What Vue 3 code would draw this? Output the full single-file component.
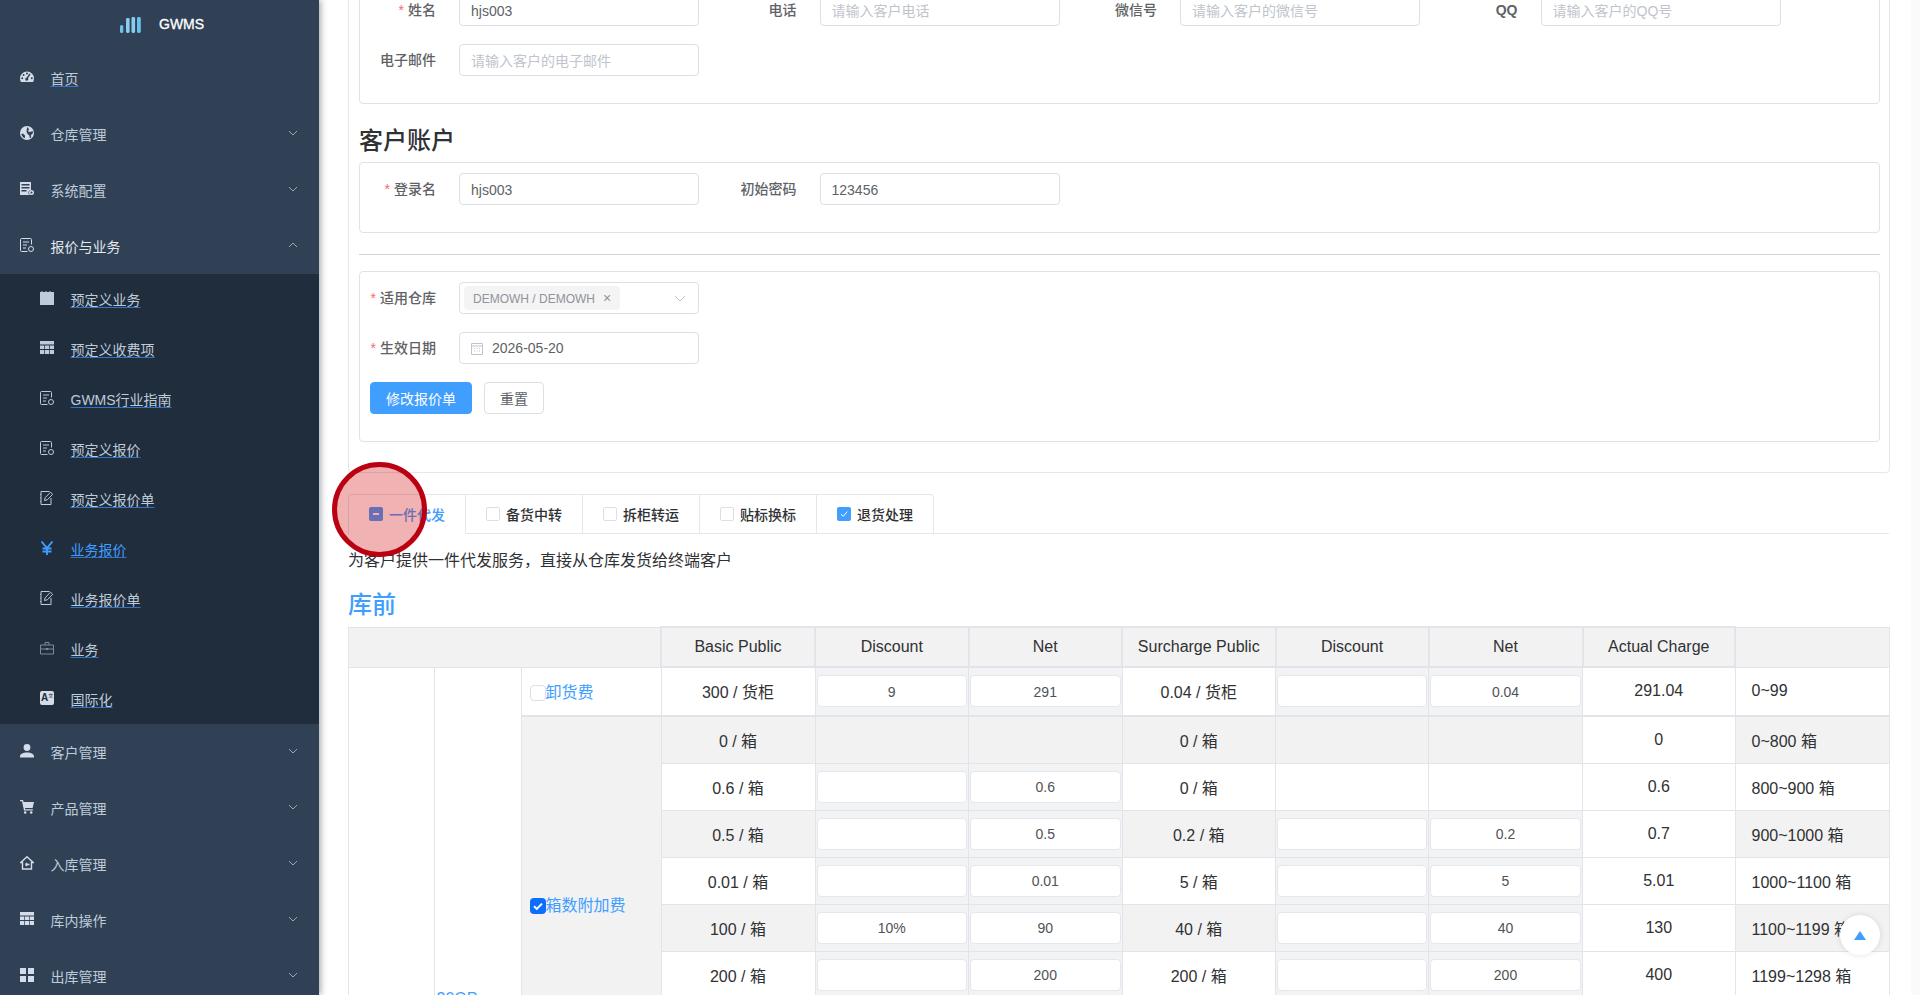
<script setup>
const hole = (x, y, r) => `M${x - r} ${y}a${r} ${r} 0 1 0 ${2 * r} 0a${r} ${r} 0 1 0 ${-2 * r} 0z`

const icons = {
  gauge: { d: "M7 1.5a7 7 0 0 0-7 7c0 1.3.3 2.5.9 3.5h12.2c.6-1 .9-2.2.9-3.5a7 7 0 0 0-7-7z" + hole(2.2, 8.3, 1) + hole(3.6, 4.9, 1) + hole(7, 3.6, 1) + hole(11.8, 8.3, 1) + "M10.6 4.2l-2.6 4a1.5 1.5 0 1 1-1.2-.6l2.6-4z" },
  globe: { d: "M7 0a7 7 0 1 0 0 14A7 7 0 0 0 7 0zM7.5 1L9 3.3 8 5.5l2 .6L12.7 5l.3 2-2 2 .1 2.6-1.2.7-.5-2.8L8 8.5 6.5 6 6.8 3zM1.3 8L3 7.5l2 2v2.2l-1 .4-1.6-1.7z" },
  server: { d: "M0 0h11v8a2.5 2.5 0 0 0-1.5 4.6V13H0zM1.5 2v1.4h8V2zM1.5 5v1.4h8V5zM1.5 8v1.4h5V8z" + hole(11.5, 10.5, 1) + "M11.5 8a2.5 2.5 0 1 0 0 5 2.5 2.5 0 0 0 0-5z" },
  report: { stroke: true, d: "M11.5 6.5V1.5a1 1 0 0 0-1-1h-9a1 1 0 0 0-1 1v11a1 1 0 0 0 1 1h6M3 4h6M3 7h4M3 10h3M13.5 11a2.5 2.5 0 1 1-5 0 2.5 2.5 0 0 1 5 0z" },
  note: { d: "M0 1h1.5V0h1v1h3V0h1v1h3V0h1v1H14v13H0z" },
  table: { d: "M0 0h14v3.5H0zM0 4.5h4.3V8H0zM5 4.5h4V8H5zM9.7 4.5H14V8H9.7zM0 9h4.3v4H0zM5 9h4v4H5zM9.7 9H14v4H9.7z" },
  edit: { stroke: true, d: "M9.5.5H1v13h10V7M1 3.5H.2M1 7H.2M1 10.5H.2M4.5 9.5l.6-2.7L10.5 1.2l2.2 2.1-5.4 5.5z" },
  yen: { stroke: true, wide: true, d: "M1.5.5L7 7l5.5-6.5M7 7v7M2.5 7.5h9M2.5 10.5h9" },
  case: { stroke: true, d: "M.5 4h13v9H.5zM5 4V1.5h4V4M.5 8H6M8 8h5.5M6 7.5h2v1H6z" },
  person: { d: hole(7, 3.5, 3.4) + "M0 13.5v-1.3C0 9.9 3.4 8.4 7 8.4s7 1.5 7 3.8v1.3z" },
  cart: { d: "M0 0h3l.6 2H14l-1.4 6H5l.2 1.2h7.6v1.2H4L2 1.2H0z" + hole(5.2, 12.5, 1.3) + hole(11.2, 12.5, 1.3) },
  home: { stroke: true, wide: true, d: "M7 .8L.8 6.5h1.7V13h9V6.5h1.7zM9.5 8.5h-4M5.5 8.5l1.6-1.5M5.5 8.5L7.1 10" },
  grid: { d: "M0 0h6v6H0zM8 0h6v6H8zM0 8h6v6H0zM8 8h6v6H8z" },
}

const topBefore = [
  { label: "首页", icon: "gauge", link: true },
  { label: "仓库管理", icon: "globe", arrow: "down" },
  { label: "系统配置", icon: "server", arrow: "down" },
  { label: "报价与业务", icon: "report", arrow: "up", open: true },
]
const subMenu = [
  { label: "预定义业务", icon: "note" },
  { label: "预定义收费项", icon: "table" },
  { label: "GWMS行业指南", icon: "report" },
  { label: "预定义报价", icon: "report" },
  { label: "预定义报价单", icon: "edit" },
  { label: "业务报价", icon: "yen", active: true },
  { label: "业务报价单", icon: "edit" },
  { label: "业务", icon: "case", dim: true },
  { label: "国际化", icon: "" },
]
const topAfter = [
  { label: "客户管理", icon: "person", arrow: "down" },
  { label: "产品管理", icon: "cart", arrow: "down" },
  { label: "入库管理", icon: "home", arrow: "down" },
  { label: "库内操作", icon: "table", arrow: "down" },
  { label: "出库管理", icon: "grid", arrow: "down" },
]

const tabs = [
  { label: "一件代发", state: "half", active: true },
  { label: "备货中转", state: "off" },
  { label: "拆柜转运", state: "off" },
  { label: "贴标换标", state: "off" },
  { label: "退货处理", state: "on" },
]

const colWidths = [85.5, 87, 140, 154, 153.5, 153.5, 153.5, 153, 154, 152.5, 154]
const heads = ["Basic Public", "Discount", "Net", "Surcharge Public", "Discount", "Net", "Actual Charge"]

// null means the cell has no input at all, "" an empty input
const rows = [
  { fee: "卸货费", span: 1, base: "300 / 货柜", d1: "9", n1: "291", sur: "0.04 / 货柜", d2: "", n2: "0.04", total: "291.04", range: "0~99" },
  { fee: "箱数附加费", checked: true, span: 8, alt: true, base: "0 / 箱", d1: null, n1: null, sur: "0 / 箱", d2: null, n2: null, total: "0", range: "0~800 箱" },
  { base: "0.6 / 箱", d1: "", n1: "0.6", sur: "0 / 箱", d2: null, n2: null, total: "0.6", range: "800~900 箱" },
  { alt: true, base: "0.5 / 箱", d1: "", n1: "0.5", sur: "0.2 / 箱", d2: "", n2: "0.2", total: "0.7", range: "900~1000 箱" },
  { base: "0.01 / 箱", d1: "", n1: "0.01", sur: "5 / 箱", d2: "", n2: "5", total: "5.01", range: "1000~1100 箱" },
  { alt: true, base: "100 / 箱", d1: "10%", n1: "90", sur: "40 / 箱", d2: "", n2: "40", total: "130", range: "1100~1199 箱" },
  { base: "200 / 箱", d1: "", n1: "200", sur: "200 / 箱", d2: "", n2: "200", total: "400", range: "1199~1298 箱" },
  { alt: true, base: "300 / 箱", d1: "", n1: "300", sur: "0 / 箱", d2: "", n2: "", total: "300", range: "1298~1400 箱" },
  { alt: false, base: "400 / 箱", d1: "", n1: "400", sur: "0 / 箱", d2: "", n2: "", total: "400", range: "1400~1500 箱" },
  { fee: "卸托费", span: 5, alt: true, base: "20 / 托", d1: "", n1: "20", sur: "0 / 托", d2: "", n2: "", total: "20", range: "0~10 托" },
  { base: "18 / 托", d1: "", n1: "18", sur: "0 / 托", d2: "", n2: "", total: "18", range: "10~20 托" },
  { alt: true, base: "16 / 托", d1: "", n1: "16", sur: "0 / 托", d2: "", n2: "", total: "16", range: "20~30 托" },
  { base: "15 / 托", d1: "", n1: "15", sur: "0 / 托", d2: "", n2: "", total: "15", range: "30~40 托" },
  { alt: true, base: "14 / 托", d1: "", n1: "14", sur: "0 / 托", d2: "", n2: "", total: "14", range: "40~50 托" },
]
</script>

<template>
  <div class="page">
    <aside class="sidebar">
      <div class="logo">
        <svg class="logo-mark" viewBox="0 0 21 16" width="21" height="16">
          <rect x="0" y="8" width="3.3" height="8" rx="1.6" fill="#6cc0ea" />
          <rect x="6" y="1" width="3.6" height="15" rx="1.4" fill="#8acdee" />
          <rect x="11.5" y="0" width="3.6" height="16" rx="1.4" fill="#8acdee" />
          <rect x="17" y="0" width="3.8" height="16" rx="1.4" fill="#6cc0ea" />
        </svg>
        <span class="logo-text">GWMS</span>
      </div>

      <nav>
        <div
          v-for="item in topBefore"
          :key="item.label"
          class="menu-item"
          :class="{ open: item.open }"
        >
          <svg class="icon" viewBox="0 0 14 14" width="14" height="14">
            <path
              :d="icons[item.icon].d"
              fill-rule="evenodd"
              :fill="icons[item.icon].stroke ? 'none' : 'currentColor'"
              :stroke="icons[item.icon].stroke ? 'currentColor' : 'none'"
            />
          </svg>
          <span :class="{ link: item.link }">{{ item.label }}</span>
          <svg v-if="item.arrow" class="arrow" :class="item.arrow" viewBox="0 0 10 6" width="10" height="6">
            <path d="M1 1l4 4 4-4" fill="none" stroke="currentColor" />
          </svg>
        </div>

        <div class="submenu">
          <div
            v-for="item in subMenu"
            :key="item.label"
            class="sub-item"
            :class="{ active: item.active, dim: item.dim }"
          >
            <svg v-if="item.icon" class="icon" viewBox="0 0 14 14" width="14" height="14">
              <path
                :d="icons[item.icon].d"
                fill-rule="evenodd"
                :fill="icons[item.icon].stroke ? 'none' : 'currentColor'"
                :stroke="icons[item.icon].stroke ? 'currentColor' : 'none'"
                :stroke-width="icons[item.icon].wide ? 1.9 : 1"
              />
            </svg>
            <span v-else class="icon trans">A<sup>文</sup></span>
            <span class="link">{{ item.label }}</span>
          </div>
        </div>

        <div v-for="item in topAfter" :key="item.label" class="menu-item">
          <svg class="icon" viewBox="0 0 14 14" width="14" height="14">
            <path
              :d="icons[item.icon].d"
              fill-rule="evenodd"
              :fill="icons[item.icon].stroke ? 'none' : 'currentColor'"
              :stroke="icons[item.icon].stroke ? 'currentColor' : 'none'"
              :stroke-width="icons[item.icon].wide ? 1.4 : 1"
            />
          </svg>
          <span>{{ item.label }}</span>
          <svg class="arrow" viewBox="0 0 10 6" width="10" height="6">
            <path d="M1 1l4 4 4-4" fill="none" stroke="currentColor" />
          </svg>
        </div>
      </nav>
    </aside>

    <main class="main">
      <section class="outer-card">
        <div class="card card-first">
          <div class="form-row">
            <div class="form-item">
              <label class="form-label"><i>*</i>姓名</label>
              <input class="text-input" value="hjs003" />
            </div>
            <div class="form-item">
              <label class="form-label">电话</label>
              <input class="text-input" placeholder="请输入客户电话" />
            </div>
            <div class="form-item">
              <label class="form-label">微信号</label>
              <input class="text-input" placeholder="请输入客户的微信号" />
            </div>
            <div class="form-item">
              <label class="form-label latin">QQ</label>
              <input class="text-input" placeholder="请输入客户的QQ号" />
            </div>
          </div>
          <div class="form-row">
            <div class="form-item">
              <label class="form-label">电子邮件</label>
              <input class="text-input" placeholder="请输入客户的电子邮件" />
            </div>
          </div>
        </div>

        <h3 class="block-title">客户账户</h3>
        <div class="card">
          <div class="form-row">
            <div class="form-item">
              <label class="form-label"><i>*</i>登录名</label>
              <input class="text-input" value="hjs003" />
            </div>
            <div class="form-item">
              <label class="form-label">初始密码</label>
              <input class="text-input" value="123456" />
            </div>
          </div>
        </div>

        <hr class="divider" />

        <div class="card">
          <div class="form-row">
            <div class="form-item">
              <label class="form-label"><i>*</i>适用仓库</label>
              <div class="select">
                <span class="tag">DEMOWH / DEMOWH<b>×</b></span>
                <svg class="select-arrow" viewBox="0 0 12 7" width="12" height="7">
                  <path d="M1 1l5 5 5-5" fill="none" stroke="currentColor" />
                </svg>
              </div>
            </div>
          </div>
          <div class="form-row">
            <div class="form-item">
              <label class="form-label"><i>*</i>生效日期</label>
              <div class="select date">
                <svg viewBox="0 0 12 13" width="12" height="13">
                  <path d="M.5 1.5h11v11H.5zM.5 4h11M3 6.5h1M5.5 6.5h1M8 6.5h1M3 9h1M5.5 9h1M8 9h1" fill="none" stroke="#c0c4cc" />
                </svg>
                <span>2026-05-20</span>
              </div>
            </div>
          </div>
          <div class="actions">
            <button class="btn primary">修改报价单</button>
            <button class="btn">重置</button>
          </div>
        </div>
      </section>

      <div class="tabs">
        <div class="tab-nav">
          <div v-for="tab in tabs" :key="tab.label" class="tab" :class="{ active: tab.active }">
            <span class="tab-check" :class="tab.state">
              <svg v-if="tab.state === 'on'" viewBox="0 0 14 14" width="14" height="14">
                <path d="M4 7l2.2 2.4L10.2 4.6" fill="none" stroke="#fff" />
              </svg>
              <em v-if="tab.state === 'half'"></em>
            </span>
            {{ tab.label }}
          </div>
        </div>
      </div>

      <p class="tab-desc">为客户提供一件代发服务，直接从仓库发货给终端客户</p>
      <h3 class="block-title blue">库前</h3>

      <table class="fee-table">
        <colgroup>
          <col v-for="(w, i) in colWidths" :key="i" :style="{ width: w + 'px' }" />
        </colgroup>
        <thead>
          <tr>
            <th colspan="3" class="blank"></th>
            <th v-for="(head, i) in heads" :key="i">{{ head }}</th>
            <th class="blank"></th>
          </tr>
        </thead>
        <tbody>
          <tr v-for="(row, i) in rows" :key="i" :class="{ alt: row.alt, first: i === 0 }">
            <td v-if="i === 0" :rowspan="rows.length" class="side"></td>
            <td v-if="i === 0" :rowspan="rows.length" class="side size-cell">20GP</td>
            <td v-if="row.fee" :rowspan="row.span" class="fee-cell" :class="{ grey: row.span > 1 }">
              <span class="fee-check" :class="{ on: row.checked }">
                <svg v-if="row.checked" viewBox="0 0 16 16" width="16" height="16">
                  <path d="M4 8.3l2.8 2.6L12 5.6" fill="none" stroke="#fff" stroke-width="2" />
                </svg>
              </span>{{ row.fee }}
            </td>
            <td>{{ row.base }}</td>
            <td :class="{ boxed: row.d1 !== null }"><input v-if="row.d1 !== null" class="cell-input" :value="row.d1" /></td>
            <td :class="{ boxed: row.n1 !== null }"><input v-if="row.n1 !== null" class="cell-input" :value="row.n1" /></td>
            <td>{{ row.sur }}</td>
            <td :class="{ boxed: row.d2 !== null }"><input v-if="row.d2 !== null" class="cell-input" :value="row.d2" /></td>
            <td :class="{ boxed: row.n2 !== null }"><input v-if="row.n2 !== null" class="cell-input" :value="row.n2" /></td>
            <td class="total">{{ row.total }}</td>
            <td class="range">{{ row.range }}</td>
          </tr>
        </tbody>
      </table>
    </main>

    <div class="scroll-track"></div>

    <div class="back-top">
      <svg viewBox="0 0 12 9" width="12" height="9">
        <path d="M6 0l6 9H0z" fill="#409eff" />
      </svg>
    </div>
    <div class="click-mark"></div>
  </div>
</template>

<style scoped>
.page {
  display: flex;
  height: 100vh;
  overflow: hidden;
  background: #fff;
  color: #303133;
  font-family: "Liberation Sans", "Noto Sans CJK SC", sans-serif;
  font-size: 14px;
}

/* sidebar */
.sidebar {
  flex: 0 0 319px;
  height: 100%;
  overflow: hidden;
  background: #304156;
  box-shadow: 2px 0 6px rgba(0, 21, 41, 0.35);
  position: relative;
  z-index: 2;
}

.logo {
  height: 50px;
  display: flex;
  align-items: flex-start;
  padding: 16px 0 0 120px;
  box-sizing: border-box;
  gap: 18px;
}

.logo-mark {
  margin-top: 1px;
}

.logo-text {
  color: #fff;
  font-weight: 400;
  font-size: 14px;
  line-height: 16px;
  -webkit-text-stroke: 0.3px #fff;
}

.menu-item,
.sub-item {
  display: flex;
  align-items: center;
  color: #bfcbd9;
  position: relative;
}

.menu-item {
  height: 56px;
  padding-left: 20px;
}

.menu-item .icon {
  color: #d3dce8;
}

.menu-item.open {
  color: #e2e7ee;
}

.icon {
  flex: 0 0 14px;
  margin-right: 16.5px;
  margin-top: -2px;
}

.link {
  text-decoration: underline;
  text-decoration-color: #2f74c9;
  text-underline-offset: 2px;
}

.arrow {
  position: absolute;
  right: 21.5px;
  top: 24px;
  color: #9aa7b6;
}

.arrow.up {
  transform: rotate(180deg);
}

.submenu {
  background: #1f2d3d;
}

.sub-item {
  height: 50px;
  padding-left: 40px;
}

.sub-item.active {
  color: #409eff;
}

.sub-item.dim .icon {
  color: #7d8a99;
}

.trans {
  width: 14px;
  height: 14px;
  border-radius: 2px;
  background: #d3dce8;
  color: #1f2d3d;
  font-size: 10px;
  font-weight: 700;
  line-height: 14px;
  padding-left: 1px;
  box-sizing: border-box;
  overflow: hidden;
  white-space: nowrap;
}

.trans sup {
  font-size: 5px;
  line-height: 0;
  font-weight: 400;
}

/* main column */
.main {
  flex: 1;
  min-width: 0;
  padding: 0 21px 0 29px;
  overflow: hidden;
}

.outer-card {
  margin-top: -27px;
  padding: 9px 9px 30px 10px;
  border: 1px solid #e4e7ed;
  border-radius: 4px;
}

.card {
  border: 1px solid #dfe2e7;
  border-radius: 4px;
  padding: 10px 10px 9px;
}

.form-row {
  display: flex;
  margin-bottom: 18px;
}

.form-item {
  flex: 0 0 360.5px;
  display: flex;
  align-items: center;
}

.form-label {
  flex: 0 0 66px;
  margin-right: 23px;
  padding-top: 1px;
  text-align: right;
  white-space: nowrap;
  color: #606266;
  font-weight: 500;
  font-size: 14px;
  line-height: 31px;
}

.form-label.latin {
  font-weight: 700;
}

.form-label i {
  color: #f56c6c;
  font-style: normal;
  font-weight: 400;
  margin-right: 4px;
}

.text-input {
  width: 240px;
  height: 32px;
  box-sizing: border-box;
  padding: 1px 11px 0;
  border: 1px solid #dcdfe6;
  border-radius: 4px;
  outline: none;
  background: #fff;
  color: #606266;
  font: inherit;
}

.text-input::placeholder {
  color: #c0c4cc;
}

.block-title {
  margin: 20px 0 4px;
  font-size: 24px;
  line-height: 34px;
  font-weight: 500;
  color: #303133;
}

.block-title.blue {
  margin: 15px 0 4px;
  color: #409eff;
}

.divider {
  margin: 21px 0 16px;
  border: 0;
  border-top: 1px solid #d3d3d3;
}

.select {
  position: relative;
  width: 240px;
  height: 32px;
  box-sizing: border-box;
  display: flex;
  align-items: center;
  padding-left: 4px;
  border: 1px solid #dcdfe6;
  border-radius: 4px;
  color: #606266;
}

.select.date {
  padding-left: 11px;
  gap: 9px;
}

.tag {
  height: 24px;
  line-height: 24px;
  padding: 0 9px;
  border-radius: 4px;
  background: #f4f4f5;
  color: #909399;
  font-size: 12px;
}

.tag b {
  margin-left: 8px;
  font-weight: 400;
  font-size: 14px;
}

.select-arrow {
  position: absolute;
  right: 12px;
  top: 12px;
  color: #c0c4cc;
}

.actions {
  display: flex;
  gap: 12px;
  margin-bottom: 18px;
}

.btn {
  height: 32px;
  width: 60px;
  padding: 0;
  border: 1px solid #dcdfe6;
  border-radius: 4px;
  background: #fff;
  color: #606266;
  font: inherit;
}

.btn.primary {
  width: 102px;
  border-color: #409eff;
  background: #409eff;
  color: #fff;
}

/* tabs */
.tabs {
  margin: 21px 1px 0 0;
  border-bottom: 1px solid #e4e7ed;
  height: 40px;
  box-sizing: border-box;
}

.tab-nav {
  display: inline-flex;
  height: 40px;
  box-sizing: border-box;
  border: 1px solid #e4e7ed;
  border-bottom: 0;
  border-radius: 4px 4px 0 0;
}

.tab {
  display: flex;
  align-items: center;
  gap: 6px;
  padding: 0 20px;
  border-right: 1px solid #e4e7ed;
  border-bottom: 1px solid #e4e7ed;
  font-weight: 500;
}

.tab:last-child {
  border-right: 0;
}

.tab.active {
  color: #409eff;
  border-bottom-color: #fff;
}

.tab-check {
  width: 14px;
  height: 14px;
  box-sizing: border-box;
  border: 1px solid #dcdfe6;
  border-radius: 2px;
  display: flex;
  align-items: center;
  justify-content: center;
}

.tab-check.on,
.tab-check.half {
  border: 0;
  background: #409eff;
}

.tab-check em {
  width: 6px;
  height: 1.5px;
  background: #fff;
}

.tab-desc {
  margin: 15px 0 0;
  font-size: 16px;
  line-height: 24px;
}

/* fee table */
.fee-table {
  width: 1541px;
  table-layout: fixed;
  border-collapse: collapse;
  font-size: 16px;
  color: #303133;
  border: 1px solid #e2e4e9;
}

.fee-table th {
  height: 38px;
  padding: 0;
  border: 2px solid #e2e4e9;
  background: #f2f2f2;
  font-weight: 400;
  text-align: center;
}

.fee-table th.blank {
  border: 1px solid #e2e4e9;
  border-bottom: 1px solid #e2e4e9;
}

.fee-table td {
  height: 46px;
  padding: 0 1px;
  border: 1px solid #e2e4e9;
  text-align: center;
  background: #fff;
}

.fee-table tr.alt td {
  background: #f2f2f2;
}

.fee-table td.boxed,
.fee-table tr.alt td.boxed {
  background: #f2f3f4;
}

.fee-table tr.first td {
  height: 46.5px;
  border-bottom-width: 2px;
}

.fee-table tr.alt td.total {
  background: #fff;
}

.fee-table td.side,
.fee-table tr.first td.side {
  border-bottom-width: 1px;
}

.fee-table td.range {
  text-align: left;
  padding-left: 16px;
}

.fee-table td.size-cell {
  text-align: left;
  padding: 4px 0 0 2px;
  color: #409eff;
}

.fee-table td.fee-cell {
  text-align: left;
  padding-left: 8px;
  color: #409eff;
}

.fee-table td.fee-cell.grey,
.fee-table tr.alt td.fee-cell.grey {
  background: #f2f2f2;
}

.fee-check {
  display: inline-block;
  width: 16px;
  height: 16px;
  box-sizing: border-box;
  vertical-align: -3px;
  border: 1px solid #dcdfe6;
  border-radius: 4px;
  background: #fff;
}

.fee-check.on {
  border: 0;
  background: #0b6efd;
}

.fee-check svg {
  display: block;
}

.cell-input {
  display: block;
  width: 100%;
  height: 32px;
  box-sizing: border-box;
  padding: 1px 0 0;
  border: 1px solid #e4e7ed;
  border-radius: 4px;
  outline: none;
  background: #fff;
  color: #505256;
  font: inherit;
  font-size: 14px;
  text-align: center;
}

.scroll-track {
  flex: 0 0 9px;
  background: #fafafa;
}

.back-top {
  position: fixed;
  right: 40px;
  bottom: 40px;
  width: 40px;
  height: 40px;
  border-radius: 50%;
  background: #fff;
  box-shadow: 0 0 6px rgba(0, 0, 0, 0.12);
  display: flex;
  align-items: center;
  justify-content: center;
}

/* click highlight from the screen recorder */
.click-mark {
  position: fixed;
  left: 332px;
  top: 462px;
  width: 95px;
  height: 95px;
  box-sizing: border-box;
  border: 5px solid #bb0011;
  border-radius: 50%;
  background: rgba(205, 0, 0, 0.3);
}
</style>

<style>
html,
body {
  margin: 0;
  height: 100%;
  overflow: hidden;
}
</style>
